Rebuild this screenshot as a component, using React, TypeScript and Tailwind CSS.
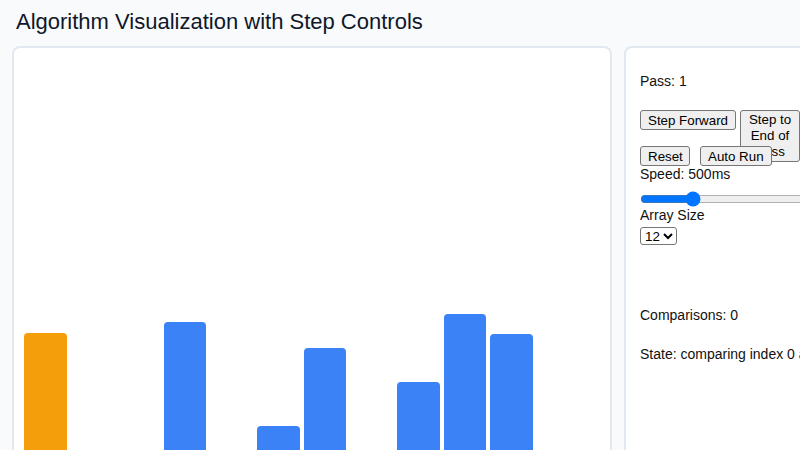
import { useState } from "react";

const bars = [
  { h: 137, active: true },
  { h: 12 },
  { h: 16 },
  { h: 148 },
  { h: 8 },
  { h: 44 },
  { h: 122 },
  { h: 14 },
  { h: 88 },
  { h: 156 },
  { h: 136 },
  { h: 18 },
];

const btn =
  "bg-[#efefef] border border-[#767676] rounded-[3px] px-[7px] h-[20px] text-[13.33px] leading-[15px] text-black";

export default function App() {
  const [speed, setSpeed] = useState(500);
  const [size, setSize] = useState("12");

  return (
    <div className="w-[800px] h-[450px] overflow-hidden bg-[#f8fafc] px-3 pt-2 font-['Liberation_Sans',Arial,sans-serif] text-[#111827]">
      <h1 className="pl-1 text-[22px] leading-7 text-[#0f172a]">
        Algorithm Visualization with Step Controls
      </h1>

      <div className="mt-[10px] flex gap-[12px]">
        {/* bars */}
        <div className="w-[600px] h-[440px] shrink-0 rounded-lg border-2 border-[#e2e8f0] bg-white px-[10px] flex items-end gap-[4.15px] pb-[14px]">
          {bars.map((b, i) => (
            <div
              key={i}
              className={`w-[42.5px] shrink-0 rounded-t-[4px] ${b.active ? "bg-[#f59e0b]" : "bg-[#3b82f6]"}`}
              style={{ height: b.h }}
            />
          ))}
        </div>

        {/* controls */}
        <div className="w-[320px] h-[440px] shrink-0 rounded-lg border-2 border-[#e2e8f0] bg-white p-[14px] text-sm text-[#111]">
          <p className="mt-[9px] leading-5">Pass: 1</p>

          <div className="mt-[19px] h-[36px] flex items-start">
            <button className={btn}>Step Forward</button>
            <button className={`${btn} ml-[4px] w-[60px] h-auto leading-[16px] py-[1px] shrink-0`}>
              Step to End of Pass
            </button>
          </div>
          <div className="flex items-start">
            <button className={`${btn} w-[50px]`}>Reset</button>
            <button className={`${btn} ml-[10px]`}>Auto Run</button>
          </div>

          <div className="leading-4">Speed: {speed}ms</div>
          <input
            type="range"
            min={100}
            max={2000}
            value={speed}
            onChange={(e) => setSpeed(Number(e.target.value))}
            className="mt-[9px] block w-[230px] h-[16px]"
          />
          <div className="leading-4">Array Size</div>
          <select
            value={size}
            onChange={(e) => setSize(e.target.value)}
            className="mt-[4px] block h-[18px] border border-[#767676] rounded-[3px] bg-white text-[13.33px] text-black"
          >
            <option value="8">8</option>
            <option value="12">12</option>
            <option value="16">16</option>
          </select>

          <p className="mt-[60px] leading-5">Comparisons: 0</p>
          <p className="mt-[19px] leading-5 whitespace-nowrap">State: comparing index 0 and 1</p>
        </div>
      </div>
    </div>
  );
}
